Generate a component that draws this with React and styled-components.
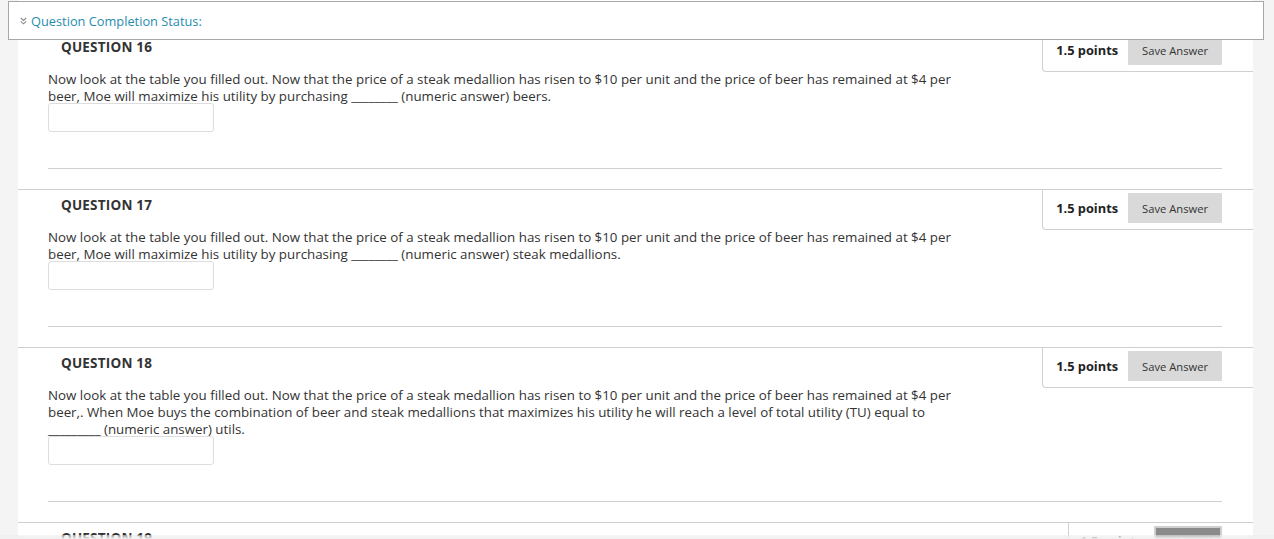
import React from "react";
import styled, { createGlobalStyle } from "styled-components";

const GlobalStyle = createGlobalStyle`
  html, body {
    margin: 0;
    padding: 0;
    background: #f4f4f4;
    font-family: "Open Sans", "Noto Sans", "Liberation Sans", sans-serif;
    color: #333;
    overflow: hidden;
  }
  * { box-sizing: border-box; }
`;

const Page = styled.div`
  height: 539px;
  overflow: hidden;
  padding: 0 21px 0 18px;
`;

const Content = styled.div`
  background: #fff;
  padding-top: 31px;
  min-height: 539px;
`;

const StatusBar = styled.div`
  position: fixed;
  top: 1px;
  left: 8px;
  width: 1256px;
  height: 39px;
  background: #fff;
  border: 1px solid #a8a8a8;
  display: flex;
  align-items: center;
  gap: 4px;
  padding: 1px 0 0 11px;
  z-index: 5;
`;

const StatusLink = styled.a`
  color: #1f8db0;
  font-size: 12.8px;
  text-decoration: none;
`;

const BottomFade = styled.div`
  position: fixed;
  left: 0;
  right: 0;
  bottom: 0;
  height: 4px;
  background: linear-gradient(rgba(236, 236, 236, 0.5), #f0f0f0);
  z-index: 5;
`;

const Block = styled.section`
  border-top: 1px solid #cfcfcf;
  padding-bottom: 20px;
`;

const Header = styled.div`
  display: flex;
  justify-content: space-between;
  align-items: flex-start;
`;

const Title = styled.h3`
  margin: 0;
  padding: 6px 0 0 43px;
  font-size: 13.5px;
  line-height: 18px;
  font-weight: 700;
  color: #333;
  letter-spacing: 0.2px;
`;

const PointsBox = styled.div`
  display: flex;
  align-items: center;
  gap: ${(p) => (p.$saved ? "12px" : "10px")};
  padding: 3px 31px 6px ${(p) => (p.$saved ? "11px" : "13px")};
  border-left: 1px solid #d0d0d0;
  border-bottom: 1px solid #d0d0d0;
  border-bottom-left-radius: 4px;
`;

const Points = styled.span`
  font-size: 12.8px;
  font-weight: 700;
  color: #222;
`;

const SaveButton = styled.button`
  height: 30px;
  padding: 0 ${(p) => (p.$saved ? "10px" : "14px")};
  border: ${(p) => (p.$saved ? "2px solid #cfcfcf" : "none")};
  border-radius: 1px;
  background: ${(p) => (p.$saved ? "#8b8b8b" : "#d9d9d9")};
  color: ${(p) => (p.$saved ? "#fff" : "#333")};
  font-family: "Open Sans", "Noto Sans", sans-serif;
  font-size: 11.2px;
  cursor: pointer;
`;

const Check = styled.span`
  color: #7bd36b;
  margin-right: 4px;
`;

const Body = styled.div`
  padding: 0 31px 0 30px;
  margin-top: -1px;
`;

const Prompt = styled.p`
  margin: 0;
  max-width: 912px;
  font-size: 13.34px;
  line-height: 17px;
  color: #333;
`;

const AnswerInput = styled.input`
  display: block;
  width: 166px;
  height: 29px;
  margin-top: -2px;
  border: 1px solid #ddd;
  border-radius: 3px;
  background: #fff;
`;

const Rule = styled.hr`
  margin: 36px 0 0;
  border: none;
  border-top: 1px solid #cfcfcf;
`;

const DoubleChevron = () => (
  <svg width="7" height="8" viewBox="0 0 7 8" aria-hidden="true">
    <path d="M0.8 1 L3.5 3.4 L6.2 1 M0.8 4.4 L3.5 6.8 L6.2 4.4" fill="none" stroke="#8a8a8a" strokeWidth="1.1" />
  </svg>
);

const lead =
  "Now look at the table you filled out. Now that the price of a steak medallion has risen to $10 per unit and the price of beer has remained at $4 per ";

const questions = [
  {
    n: 16,
    text: lead + "beer, Moe will maximize his utility by purchasing ________ (numeric answer) beers.",
  },
  {
    n: 17,
    text: lead + "beer, Moe will maximize his utility by purchasing ________ (numeric answer) steak medallions.",
  },
  {
    n: 18,
    text:
      lead +
      "beer,. When Moe buys the combination of beer and steak medallions that maximizes his utility he will reach a level of total utility (TU) equal to _________ (numeric answer) utils.",
  },
];

function Question({ n, text, saved }) {
  return (
    <Block>
      <Header>
        <Title>QUESTION {n}</Title>
        <PointsBox $saved={saved}>
          <Points>1.5 points</Points>
          <SaveButton $saved={saved}>
            {saved ? (
              <>
                <Check>✓</Check>Saved
              </>
            ) : (
              "Save Answer"
            )}
          </SaveButton>
        </PointsBox>
      </Header>
      {text && (
        <Body>
          <Prompt>{text}</Prompt>
          <AnswerInput type="text" />
          <Rule />
        </Body>
      )}
    </Block>
  );
}

export default function App() {
  return (
    <>
      <GlobalStyle />
      <StatusBar>
        <DoubleChevron />
        <StatusLink href="#">Question Completion Status:</StatusLink>
      </StatusBar>
      <Page>
        <Content>
          {questions.map((q) => (
            <Question key={q.n} n={q.n} text={q.text} />
          ))}
          <Question n={19} saved />
        </Content>
      </Page>
      <BottomFade />
    </>
  );
}
